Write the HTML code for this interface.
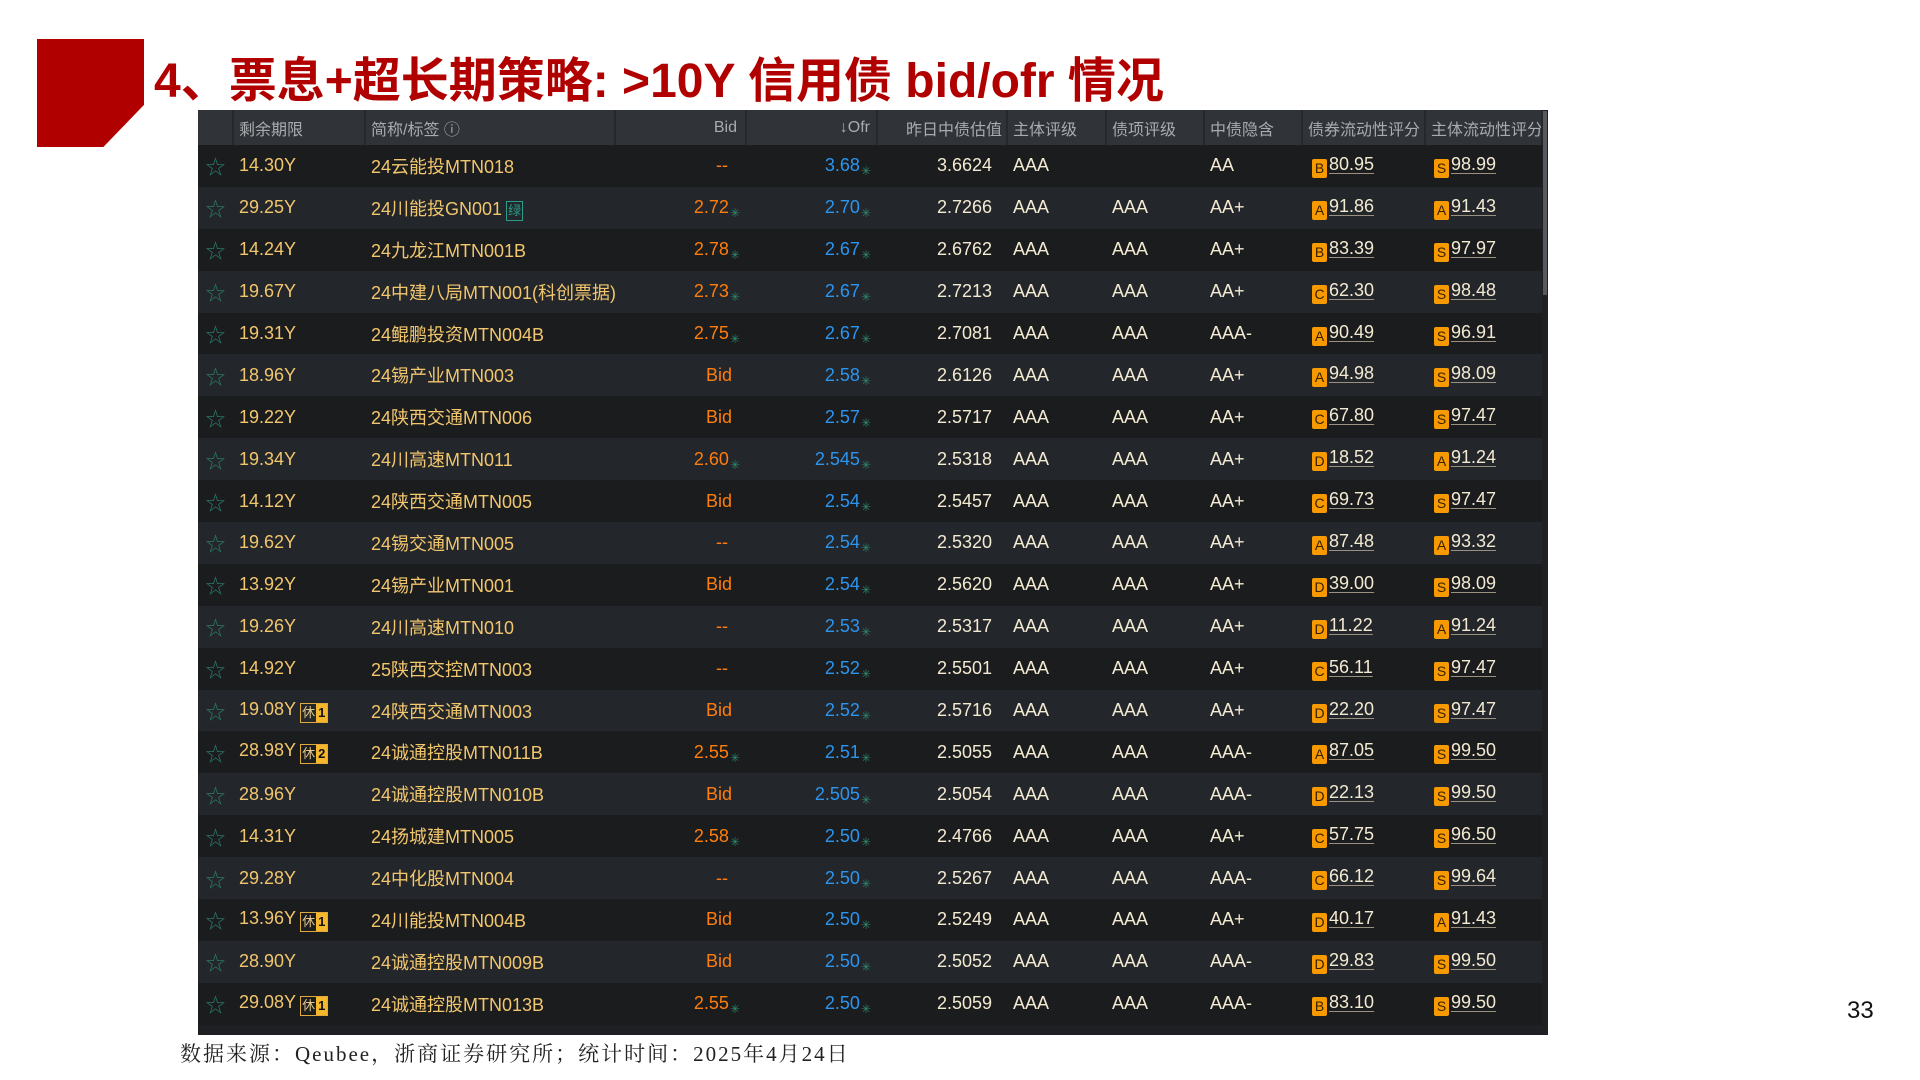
<!DOCTYPE html>
<html><head><meta charset="utf-8"><style>
*{margin:0;padding:0;box-sizing:border-box}
body{width:1920px;height:1080px;background:#fff;position:relative;overflow:hidden;font-family:"Liberation Sans","Noto Sans CJK SC",sans-serif}
.red{position:absolute;left:37px;top:39px;width:107px;height:108px;background:#b00000;clip-path:polygon(0 0,100% 0,100% 61%,62% 100%,0 100%)}
.title{position:absolute;left:154px;top:41px;font-size:48px;font-weight:bold;color:#b00000;font-family:"Liberation Sans","Noto Sans CJK SC",sans-serif;white-space:nowrap}
.tbl{position:absolute;left:198px;top:110px;width:1350px;height:925px;background:#1e2023;overflow:hidden}
.sb{position:absolute;left:1543px;top:111px;width:4px;height:184px;background:#55585c}
table{border-collapse:collapse;table-layout:fixed;width:1344px;font-family:"Liberation Sans","Noto Sans CJK SC",sans-serif}
th{height:35px;background:#303337;color:#a9acaf;font-weight:normal;font-size:16px;text-align:left;padding-left:5px;border-right:2px solid #26282b;white-space:nowrap;overflow:hidden}
td{height:41.9px;font-size:18px;color:#f3ead2;white-space:nowrap;padding-left:6px;overflow:hidden}
tr.o td{background:#1b1c1e}tr.e td{background:#23262a}
.st{color:#2c7a68;font-size:20px;text-align:center;padding:0}
.m,.n{color:#f2c66d}
.r{text-align:right;padding-right:6px;padding-left:0}
.b{color:#ff7d0c}.of{color:#2b95f0}
.x{color:#2f8a6e;font-size:12px;position:relative;top:4px;margin-left:1px}
.v{text-align:right;padding-right:15px}
.bd{display:inline-block;width:15px;height:19px;background:#f79a00;color:#3a2000;font-size:14px;text-align:center;line-height:19px;border-radius:2px;margin-right:2px;vertical-align:-3px}
.u{text-decoration:underline;text-decoration-color:#9a9080;text-underline-offset:3px}
.xiu{display:inline-block;border:1px solid #e0a93a;height:20px;font-size:13px;line-height:18px;vertical-align:-2px;margin-left:4px}
.xiu i{font-style:normal;color:#e5c88a;padding:0 1px}
.xiu b{background:#f5b82d;color:#111;padding:0 2px;display:inline-block;height:18px}
.lv{display:inline-block;border:1px solid #2c9c88;color:#2c9c88;font-size:13px;padding:0 1px;line-height:18px;margin-left:4px}
.foot{position:absolute;left:180px;top:1038px;font-size:21px;letter-spacing:2px;font-family:"Liberation Serif","Noto Serif CJK SC",serif;color:#222}
.pg{position:absolute;left:1847px;top:997px;font-size:24px;color:#111}
</style></head><body>
<div class="red"></div>
<div class="title">4、票息+超长期策略: &gt;10Y 信用债 bid/ofr 情况</div>
<div class="tbl">
<table>
<colgroup><col style="width:35px"><col style="width:132px"><col style="width:250px"><col style="width:131px"><col style="width:131px"><col style="width:130px"><col style="width:99px"><col style="width:98px"><col style="width:98px"><col style="width:123px"><col style="width:117px"></colgroup>
<tr><th></th><th>剩余期限</th><th>简称/标签 ⓘ</th><th style="text-align:right;padding-right:8px">Bid</th><th style="text-align:right;padding-right:6px">↓Ofr</th><th style="text-align:right;padding-right:4px">昨日中债估值</th><th>主体评级</th><th>债项评级</th><th>中债隐含</th><th>债券流动性评分</th><th>主体流动性评分</th></tr>
<tr class="o"><td class="st">☆</td><td class="m">14.30Y</td><td class="n">24云能投MTN018</td><td class="r b" style="padding-right:18px">--</td><td class="r of">3.68<span class="x">✳</span></td><td class="v">3.6624</td><td>AAA</td><td></td><td>AA</td><td style="padding-left:10px"><span class="bd">B</span><span class="u">80.95</span></td><td style="padding-left:9px"><span class="bd">S</span><span class="u">98.99</span></td></tr>
<tr class="e"><td class="st">☆</td><td class="m">29.25Y</td><td class="n">24川能投GN001<span class="lv">绿</span></td><td class="r b">2.72<span class="x">✳</span></td><td class="r of">2.70<span class="x">✳</span></td><td class="v">2.7266</td><td>AAA</td><td>AAA</td><td>AA+</td><td style="padding-left:10px"><span class="bd">A</span><span class="u">91.86</span></td><td style="padding-left:9px"><span class="bd">A</span><span class="u">91.43</span></td></tr>
<tr class="o"><td class="st">☆</td><td class="m">14.24Y</td><td class="n">24九龙江MTN001B</td><td class="r b">2.78<span class="x">✳</span></td><td class="r of">2.67<span class="x">✳</span></td><td class="v">2.6762</td><td>AAA</td><td>AAA</td><td>AA+</td><td style="padding-left:10px"><span class="bd">B</span><span class="u">83.39</span></td><td style="padding-left:9px"><span class="bd">S</span><span class="u">97.97</span></td></tr>
<tr class="e"><td class="st">☆</td><td class="m">19.67Y</td><td class="n">24中建八局MTN001(科创票据)</td><td class="r b">2.73<span class="x">✳</span></td><td class="r of">2.67<span class="x">✳</span></td><td class="v">2.7213</td><td>AAA</td><td>AAA</td><td>AA+</td><td style="padding-left:10px"><span class="bd">C</span><span class="u">62.30</span></td><td style="padding-left:9px"><span class="bd">S</span><span class="u">98.48</span></td></tr>
<tr class="o"><td class="st">☆</td><td class="m">19.31Y</td><td class="n">24鲲鹏投资MTN004B</td><td class="r b">2.75<span class="x">✳</span></td><td class="r of">2.67<span class="x">✳</span></td><td class="v">2.7081</td><td>AAA</td><td>AAA</td><td>AAA-</td><td style="padding-left:10px"><span class="bd">A</span><span class="u">90.49</span></td><td style="padding-left:9px"><span class="bd">S</span><span class="u">96.91</span></td></tr>
<tr class="e"><td class="st">☆</td><td class="m">18.96Y</td><td class="n">24锡产业MTN003</td><td class="r b" style="padding-right:14px">Bid</td><td class="r of">2.58<span class="x">✳</span></td><td class="v">2.6126</td><td>AAA</td><td>AAA</td><td>AA+</td><td style="padding-left:10px"><span class="bd">A</span><span class="u">94.98</span></td><td style="padding-left:9px"><span class="bd">S</span><span class="u">98.09</span></td></tr>
<tr class="o"><td class="st">☆</td><td class="m">19.22Y</td><td class="n">24陕西交通MTN006</td><td class="r b" style="padding-right:14px">Bid</td><td class="r of">2.57<span class="x">✳</span></td><td class="v">2.5717</td><td>AAA</td><td>AAA</td><td>AA+</td><td style="padding-left:10px"><span class="bd">C</span><span class="u">67.80</span></td><td style="padding-left:9px"><span class="bd">S</span><span class="u">97.47</span></td></tr>
<tr class="e"><td class="st">☆</td><td class="m">19.34Y</td><td class="n">24川高速MTN011</td><td class="r b">2.60<span class="x">✳</span></td><td class="r of">2.545<span class="x">✳</span></td><td class="v">2.5318</td><td>AAA</td><td>AAA</td><td>AA+</td><td style="padding-left:10px"><span class="bd">D</span><span class="u">18.52</span></td><td style="padding-left:9px"><span class="bd">A</span><span class="u">91.24</span></td></tr>
<tr class="o"><td class="st">☆</td><td class="m">14.12Y</td><td class="n">24陕西交通MTN005</td><td class="r b" style="padding-right:14px">Bid</td><td class="r of">2.54<span class="x">✳</span></td><td class="v">2.5457</td><td>AAA</td><td>AAA</td><td>AA+</td><td style="padding-left:10px"><span class="bd">C</span><span class="u">69.73</span></td><td style="padding-left:9px"><span class="bd">S</span><span class="u">97.47</span></td></tr>
<tr class="e"><td class="st">☆</td><td class="m">19.62Y</td><td class="n">24锡交通MTN005</td><td class="r b" style="padding-right:18px">--</td><td class="r of">2.54<span class="x">✳</span></td><td class="v">2.5320</td><td>AAA</td><td>AAA</td><td>AA+</td><td style="padding-left:10px"><span class="bd">A</span><span class="u">87.48</span></td><td style="padding-left:9px"><span class="bd">A</span><span class="u">93.32</span></td></tr>
<tr class="o"><td class="st">☆</td><td class="m">13.92Y</td><td class="n">24锡产业MTN001</td><td class="r b" style="padding-right:14px">Bid</td><td class="r of">2.54<span class="x">✳</span></td><td class="v">2.5620</td><td>AAA</td><td>AAA</td><td>AA+</td><td style="padding-left:10px"><span class="bd">D</span><span class="u">39.00</span></td><td style="padding-left:9px"><span class="bd">S</span><span class="u">98.09</span></td></tr>
<tr class="e"><td class="st">☆</td><td class="m">19.26Y</td><td class="n">24川高速MTN010</td><td class="r b" style="padding-right:18px">--</td><td class="r of">2.53<span class="x">✳</span></td><td class="v">2.5317</td><td>AAA</td><td>AAA</td><td>AA+</td><td style="padding-left:10px"><span class="bd">D</span><span class="u">11.22</span></td><td style="padding-left:9px"><span class="bd">A</span><span class="u">91.24</span></td></tr>
<tr class="o"><td class="st">☆</td><td class="m">14.92Y</td><td class="n">25陕西交控MTN003</td><td class="r b" style="padding-right:18px">--</td><td class="r of">2.52<span class="x">✳</span></td><td class="v">2.5501</td><td>AAA</td><td>AAA</td><td>AA+</td><td style="padding-left:10px"><span class="bd">C</span><span class="u">56.11</span></td><td style="padding-left:9px"><span class="bd">S</span><span class="u">97.47</span></td></tr>
<tr class="e"><td class="st">☆</td><td class="m">19.08Y<span class="xiu"><i>休</i><b>1</b></span></td><td class="n">24陕西交通MTN003</td><td class="r b" style="padding-right:14px">Bid</td><td class="r of">2.52<span class="x">✳</span></td><td class="v">2.5716</td><td>AAA</td><td>AAA</td><td>AA+</td><td style="padding-left:10px"><span class="bd">D</span><span class="u">22.20</span></td><td style="padding-left:9px"><span class="bd">S</span><span class="u">97.47</span></td></tr>
<tr class="o"><td class="st">☆</td><td class="m">28.98Y<span class="xiu"><i>休</i><b>2</b></span></td><td class="n">24诚通控股MTN011B</td><td class="r b">2.55<span class="x">✳</span></td><td class="r of">2.51<span class="x">✳</span></td><td class="v">2.5055</td><td>AAA</td><td>AAA</td><td>AAA-</td><td style="padding-left:10px"><span class="bd">A</span><span class="u">87.05</span></td><td style="padding-left:9px"><span class="bd">S</span><span class="u">99.50</span></td></tr>
<tr class="e"><td class="st">☆</td><td class="m">28.96Y</td><td class="n">24诚通控股MTN010B</td><td class="r b" style="padding-right:14px">Bid</td><td class="r of">2.505<span class="x">✳</span></td><td class="v">2.5054</td><td>AAA</td><td>AAA</td><td>AAA-</td><td style="padding-left:10px"><span class="bd">D</span><span class="u">22.13</span></td><td style="padding-left:9px"><span class="bd">S</span><span class="u">99.50</span></td></tr>
<tr class="o"><td class="st">☆</td><td class="m">14.31Y</td><td class="n">24扬城建MTN005</td><td class="r b">2.58<span class="x">✳</span></td><td class="r of">2.50<span class="x">✳</span></td><td class="v">2.4766</td><td>AAA</td><td>AAA</td><td>AA+</td><td style="padding-left:10px"><span class="bd">C</span><span class="u">57.75</span></td><td style="padding-left:9px"><span class="bd">S</span><span class="u">96.50</span></td></tr>
<tr class="e"><td class="st">☆</td><td class="m">29.28Y</td><td class="n">24中化股MTN004</td><td class="r b" style="padding-right:18px">--</td><td class="r of">2.50<span class="x">✳</span></td><td class="v">2.5267</td><td>AAA</td><td>AAA</td><td>AAA-</td><td style="padding-left:10px"><span class="bd">C</span><span class="u">66.12</span></td><td style="padding-left:9px"><span class="bd">S</span><span class="u">99.64</span></td></tr>
<tr class="o"><td class="st">☆</td><td class="m">13.96Y<span class="xiu"><i>休</i><b>1</b></span></td><td class="n">24川能投MTN004B</td><td class="r b" style="padding-right:14px">Bid</td><td class="r of">2.50<span class="x">✳</span></td><td class="v">2.5249</td><td>AAA</td><td>AAA</td><td>AA+</td><td style="padding-left:10px"><span class="bd">D</span><span class="u">40.17</span></td><td style="padding-left:9px"><span class="bd">A</span><span class="u">91.43</span></td></tr>
<tr class="e"><td class="st">☆</td><td class="m">28.90Y</td><td class="n">24诚通控股MTN009B</td><td class="r b" style="padding-right:14px">Bid</td><td class="r of">2.50<span class="x">✳</span></td><td class="v">2.5052</td><td>AAA</td><td>AAA</td><td>AAA-</td><td style="padding-left:10px"><span class="bd">D</span><span class="u">29.83</span></td><td style="padding-left:9px"><span class="bd">S</span><span class="u">99.50</span></td></tr>
<tr class="o"><td class="st">☆</td><td class="m">29.08Y<span class="xiu"><i>休</i><b>1</b></span></td><td class="n">24诚通控股MTN013B</td><td class="r b">2.55<span class="x">✳</span></td><td class="r of">2.50<span class="x">✳</span></td><td class="v">2.5059</td><td>AAA</td><td>AAA</td><td>AAA-</td><td style="padding-left:10px"><span class="bd">B</span><span class="u">83.10</span></td><td style="padding-left:9px"><span class="bd">S</span><span class="u">99.50</span></td></tr>
</table>
</div>
<div class="sb"></div>
<div class="foot">数据来源：Qeubee，浙商证券研究所；统计时间：2025年4月24日</div>
<div class="pg">33</div>
</body></html>
